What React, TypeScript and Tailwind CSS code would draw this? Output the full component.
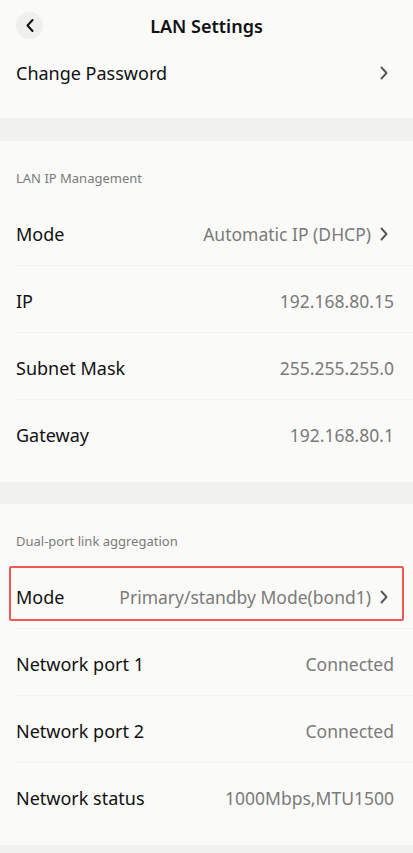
import type { ReactNode } from 'react';

interface RowItem {
  label: string;
  value?: string;
  link?: boolean;
  highlight?: boolean;
}

const LAN_ROWS: RowItem[] = [
  { label: 'Mode', value: 'Automatic IP (DHCP)', link: true },
  { label: 'IP', value: '192.168.80.15' },
  { label: 'Subnet Mask', value: '255.255.255.0' },
  { label: 'Gateway', value: '192.168.80.1' },
];

const BOND_ROWS: RowItem[] = [
  { label: 'Mode', value: 'Primary/standby Mode(bond1)', link: true, highlight: true },
  { label: 'Network port 1', value: 'Connected' },
  { label: 'Network port 2', value: 'Connected' },
  { label: 'Network status', value: '1000Mbps,MTU1500' },
];

function ChevronRight() {
  return (
    <svg width="8" height="14" viewBox="0 0 8 14" fill="none" className="ml-[9px] mr-[6px] shrink-0">
      <path d="M1.5 1.5L6.5 7L1.5 12.5" stroke="#555" strokeWidth="1.9" strokeLinecap="round" strokeLinejoin="round" />
    </svg>
  );
}

function Row({ item, last }: { item: RowItem; last: boolean }) {
  return (
    <div className={`relative ml-4 flex h-[67px] items-center pt-[4px] pr-[19px] ${last ? '' : 'border-b border-[#f2f2f1]'}`}>
      {item.highlight && (
        <div className="absolute top-[4px] bottom-[7px] -left-[7px] right-[9px] rounded-[2px] border-2 border-[#f25757]" />
      )}
      <span className="flex-1 text-[18px] text-[#111]">{item.label}</span>
      <span className="text-[17.5px] text-[#7a7a7a]">{item.value}</span>
      {item.link && <ChevronRight />}
    </div>
  );
}

function Section({ title, rows }: { title: string; rows: RowItem[] }): ReactNode {
  return (
    <section className="bg-[#fafaf9] pt-[28px] pb-[15px]">
      <p className="mb-[12px] px-4 text-[13px] leading-[18px] text-[#7a7a7a]">{title}</p>
      {rows.map((row, i) => (
        <Row key={row.label + i} item={row} last={i === rows.length - 1} />
      ))}
    </section>
  );
}

export default function App() {
  return (
    <div className="min-h-[853px] w-full bg-[#f1f1f0]" style={{ fontFamily: '"Noto Sans", "Liberation Sans", sans-serif' }}>
      <div className="bg-[#fafaf9]">
        <header className="relative flex h-[52px] items-center justify-center">
          <button className="absolute left-4 top-[12px] flex h-[27px] w-[27px] items-center justify-center rounded-full bg-[#efefee]">
            <svg width="8" height="13" viewBox="0 0 8 13" fill="none">
              <path d="M6.5 1L1.5 6.5L6.5 12" stroke="#111" strokeWidth="2" strokeLinecap="round" strokeLinejoin="round" />
            </svg>
          </button>
          <h1 className="text-[18px] font-semibold text-[#111]">LAN Settings</h1>
        </header>
        <div className="flex h-[42px] items-center pl-4 pr-[19px]">
          <span className="flex-1 text-[18px] text-[#111]">Change Password</span>
          <ChevronRight />
        </div>
        <div className="h-[24px]" />
      </div>

      <div className="h-[23px]" />
      <Section title="LAN IP Management" rows={LAN_ROWS} />
      <div className="h-[22px]" />
      <Section title="Dual-port link aggregation" rows={BOND_ROWS} />
    </div>
  );
}
